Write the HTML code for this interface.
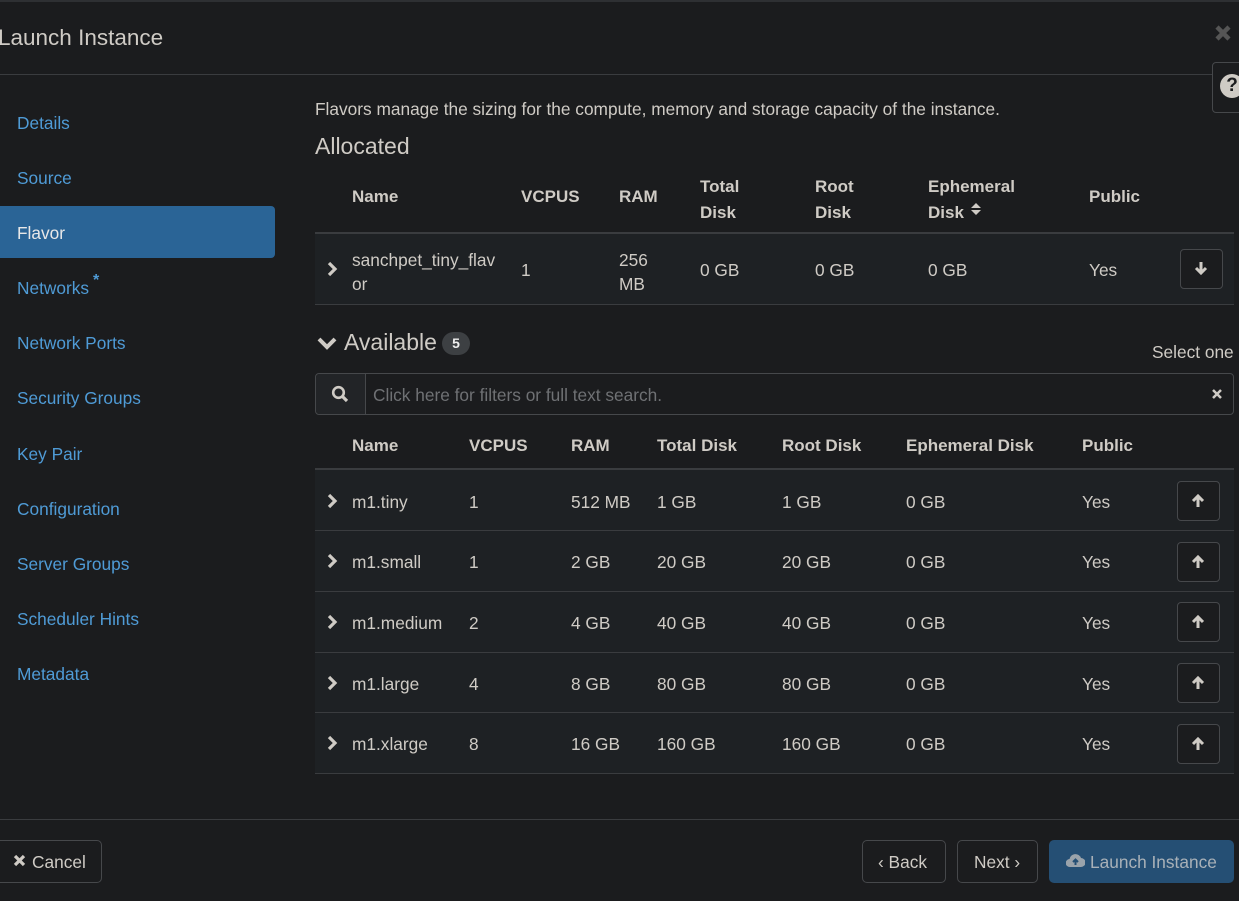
<!DOCTYPE html>
<html><head><meta charset="utf-8"><style>
*{box-sizing:border-box;margin:0;padding:0}
body{width:1239px;height:901px;background:#1b1c1e;font-family:"Liberation Sans",sans-serif;color:#cfcbc5;position:relative;overflow:hidden;font-size:17.3px}
.a{position:absolute;white-space:nowrap}
.nav{position:absolute;left:17px;color:#4f9bd6;font-size:17.3px}
.hd{font-weight:bold;color:#cfcbc5;font-size:17px}
.row{position:absolute;left:315px;width:919px;background:#1e2124;border-bottom:1px solid #3a3c3f}
.btn{position:absolute;border:1px solid #46484b;border-radius:4px;width:43px;height:40px;background:#1b1c1e}
.chev{position:absolute;left:325px;width:14px;height:16px}
</style></head><body>
<div class="a" style="left:0;top:0;width:1239px;height:2px;background:#2e3033"></div>
<div class="a" style="left:-2px;top:25px;font-size:22.5px;color:#cfcbc5">Launch Instance</div>
<svg class="a" style="left:1214px;top:24px" width="18" height="18" viewBox="0 0 18 18"><path d="M3 3L15 15M15 3L3 15" stroke="#555" stroke-width="4.5"/></svg>
<div class="a" style="left:0;top:74px;width:1239px;height:1px;background:#3a3c3f"></div>
<div class="a" style="left:1212px;top:62px;width:40px;height:51px;border:1px solid #46484b;border-radius:4px;background:#1b1c1e"></div>
<div class="a" style="left:1220px;top:74px;width:24px;height:24px;border-radius:50%;background:#cfcbc5;color:#1b1c1e;font-weight:bold;font-size:19px;text-align:center;line-height:24px">?</div>

<div class="nav" style="top:113px">Details</div>
<div class="nav" style="top:168px">Source</div>
<div class="a" style="left:0;top:206px;width:275px;height:52px;background:#2a6496;border-radius:0 4px 4px 0"></div>
<div class="nav" style="top:223px;color:#e8e8e8">Flavor</div>
<div class="nav" style="top:278px">Networks</div>
<div class="a" style="left:93px;top:272px;color:#4f9bd6;font-size:16px;font-weight:bold">*</div>
<div class="nav" style="top:333px">Network Ports</div>
<div class="nav" style="top:388px">Security Groups</div>
<div class="nav" style="top:444px">Key Pair</div>
<div class="nav" style="top:499px">Configuration</div>
<div class="nav" style="top:554px">Server Groups</div>
<div class="nav" style="top:609px">Scheduler Hints</div>
<div class="nav" style="top:664px">Metadata</div>

<div class="a" style="left:315px;top:99px">Flavors manage the sizing for the compute, memory and storage capacity of the instance.</div>
<div class="a" style="left:315px;top:133px;font-size:23px">Allocated</div>

<div class="a hd" style="left:352px;top:187px">Name</div>
<div class="a hd" style="left:521px;top:187px">VCPUS</div>
<div class="a hd" style="left:619px;top:187px">RAM</div>
<div class="a hd" style="left:700px;top:174px;line-height:26px">Total<br>Disk</div>
<div class="a hd" style="left:815px;top:174px;line-height:26px">Root<br>Disk</div>
<div class="a hd" style="left:928px;top:174px;line-height:26px">Ephemeral<br>Disk</div>
<svg class="a" style="left:970px;top:201px" width="12" height="16" viewBox="0 0 12 16"><path d="M1 7L6 2L11 7ZM1 9L6 14L11 9Z" fill="#cfcbc5"/></svg>
<div class="a hd" style="left:1089px;top:187px">Public</div>
<div class="a" style="left:315px;top:232px;width:919px;height:2px;background:#3a3c3f"></div>
<div class="row" style="top:234px;height:71px"></div>
<svg class="chev" style="top:261px" viewBox="0 0 14 16"><path d="M4 2L10 8L4 14" stroke="#cfcbc5" stroke-width="3.2" fill="none"/></svg>
<div class="a" style="left:352px;top:248px;line-height:24px">sanchpet_tiny_flav<br>or</div>
<div class="a" style="left:521px;top:260px">1</div>
<div class="a" style="left:619px;top:248px;line-height:24px">256<br>MB</div>
<div class="a" style="left:700px;top:260px">0 GB</div>
<div class="a" style="left:815px;top:260px">0 GB</div>
<div class="a" style="left:928px;top:260px">0 GB</div>
<div class="a" style="left:1089px;top:260px">Yes</div>
<div class="btn" style="left:1180px;top:249px"></div>
<svg class="a" style="left:1194px;top:261px" width="14" height="14" viewBox="0 0 14 14"><path d="M7 1V12M2 7L7 12L12 7" stroke="#cfcbc5" stroke-width="3" fill="none"/></svg>

<svg class="a" style="left:316px;top:334px" width="22" height="18" viewBox="0 0 22 18"><path d="M3 5L11 13L19 5" stroke="#cfcbc5" stroke-width="4" fill="none"/></svg>
<div class="a" style="left:344px;top:329px;font-size:23px">Available</div>
<div class="a" style="left:442px;top:332px;width:28px;height:23px;border-radius:12px;background:#3d4043;color:#eee;font-weight:bold;font-size:14px;text-align:center;line-height:23px">5</div>
<div class="a" style="left:1152px;top:342px">Select one</div>

<div class="a" style="left:315px;top:373px;width:919px;height:42px;border:1px solid #46484b;border-radius:4px;background:#1b1c1e"></div>
<div class="a" style="left:316px;top:374px;width:50px;height:40px;background:#222427;border-right:1px solid #46484b;border-radius:4px 0 0 4px"></div>
<svg class="a" style="left:331px;top:385px" width="18" height="18" viewBox="0 0 18 18"><circle cx="7.5" cy="7.5" r="5.3" stroke="#cfcbc5" stroke-width="2.6" fill="none"/><path d="M11.5 11.5L16 16" stroke="#cfcbc5" stroke-width="3.2"/></svg>
<div class="a" style="left:373px;top:385px;color:#6f7174">Click here for filters or full text search.</div>
<svg class="a" style="left:1211px;top:388px" width="12" height="12" viewBox="0 0 12 12"><path d="M2 2L10 10M10 2L2 10" stroke="#cfcbc5" stroke-width="2.5"/></svg>

<div class="a hd" style="left:352px;top:436px">Name</div>
<div class="a hd" style="left:469px;top:436px">VCPUS</div>
<div class="a hd" style="left:571px;top:436px">RAM</div>
<div class="a hd" style="left:657px;top:436px">Total Disk</div>
<div class="a hd" style="left:782px;top:436px">Root Disk</div>
<div class="a hd" style="left:906px;top:436px">Ephemeral Disk</div>
<div class="a hd" style="left:1082px;top:436px">Public</div>
<div class="a" style="left:315px;top:468px;width:919px;height:2px;background:#3a3c3f"></div>

<div class="row" style="top:470px;height:61px"></div>
<div class="row" style="top:531px;height:61px"></div>
<div class="row" style="top:592px;height:61px"></div>
<div class="row" style="top:653px;height:60px"></div>
<div class="row" style="top:713px;height:61px"></div>

<svg class="chev" style="top:493px" viewBox="0 0 14 16"><path d="M4 2L10 8L4 14" stroke="#cfcbc5" stroke-width="3.2" fill="none"/></svg>
<div class="a" style="left:352px;top:492px">m1.tiny</div><div class="a" style="left:469px;top:492px">1</div><div class="a" style="left:571px;top:492px">512 MB</div><div class="a" style="left:657px;top:492px">1 GB</div><div class="a" style="left:782px;top:492px">1 GB</div><div class="a" style="left:906px;top:492px">0 GB</div><div class="a" style="left:1082px;top:492px">Yes</div>
<div class="btn" style="left:1177px;top:481px"></div>

<svg class="chev" style="top:553px" viewBox="0 0 14 16"><path d="M4 2L10 8L4 14" stroke="#cfcbc5" stroke-width="3.2" fill="none"/></svg>
<div class="a" style="left:352px;top:552px">m1.small</div><div class="a" style="left:469px;top:552px">1</div><div class="a" style="left:571px;top:552px">2 GB</div><div class="a" style="left:657px;top:552px">20 GB</div><div class="a" style="left:782px;top:552px">20 GB</div><div class="a" style="left:906px;top:552px">0 GB</div><div class="a" style="left:1082px;top:552px">Yes</div>
<div class="btn" style="left:1177px;top:542px"></div>

<svg class="chev" style="top:614px" viewBox="0 0 14 16"><path d="M4 2L10 8L4 14" stroke="#cfcbc5" stroke-width="3.2" fill="none"/></svg>
<div class="a" style="left:352px;top:613px">m1.medium</div><div class="a" style="left:469px;top:613px">2</div><div class="a" style="left:571px;top:613px">4 GB</div><div class="a" style="left:657px;top:613px">40 GB</div><div class="a" style="left:782px;top:613px">40 GB</div><div class="a" style="left:906px;top:613px">0 GB</div><div class="a" style="left:1082px;top:613px">Yes</div>
<div class="btn" style="left:1177px;top:602px"></div>

<svg class="chev" style="top:675px" viewBox="0 0 14 16"><path d="M4 2L10 8L4 14" stroke="#cfcbc5" stroke-width="3.2" fill="none"/></svg>
<div class="a" style="left:352px;top:674px">m1.large</div><div class="a" style="left:469px;top:674px">4</div><div class="a" style="left:571px;top:674px">8 GB</div><div class="a" style="left:657px;top:674px">80 GB</div><div class="a" style="left:782px;top:674px">80 GB</div><div class="a" style="left:906px;top:674px">0 GB</div><div class="a" style="left:1082px;top:674px">Yes</div>
<div class="btn" style="left:1177px;top:663px"></div>

<svg class="chev" style="top:735px" viewBox="0 0 14 16"><path d="M4 2L10 8L4 14" stroke="#cfcbc5" stroke-width="3.2" fill="none"/></svg>
<div class="a" style="left:352px;top:734px">m1.xlarge</div><div class="a" style="left:469px;top:734px">8</div><div class="a" style="left:571px;top:734px">16 GB</div><div class="a" style="left:657px;top:734px">160 GB</div><div class="a" style="left:782px;top:734px">160 GB</div><div class="a" style="left:906px;top:734px">0 GB</div><div class="a" style="left:1082px;top:734px">Yes</div>
<div class="btn" style="left:1177px;top:724px"></div>

<svg class="a" style="left:1191px;top:494px" width="14" height="14" viewBox="0 0 14 14"><path d="M7 13V2M2 7L7 2L12 7" stroke="#cfcbc5" stroke-width="3" fill="none"/></svg>
<svg class="a" style="left:1191px;top:555px" width="14" height="14" viewBox="0 0 14 14"><path d="M7 13V2M2 7L7 2L12 7" stroke="#cfcbc5" stroke-width="3" fill="none"/></svg>
<svg class="a" style="left:1191px;top:615px" width="14" height="14" viewBox="0 0 14 14"><path d="M7 13V2M2 7L7 2L12 7" stroke="#cfcbc5" stroke-width="3" fill="none"/></svg>
<svg class="a" style="left:1191px;top:676px" width="14" height="14" viewBox="0 0 14 14"><path d="M7 13V2M2 7L7 2L12 7" stroke="#cfcbc5" stroke-width="3" fill="none"/></svg>
<svg class="a" style="left:1191px;top:737px" width="14" height="14" viewBox="0 0 14 14"><path d="M7 13V2M2 7L7 2L12 7" stroke="#cfcbc5" stroke-width="3" fill="none"/></svg>

<div class="a" style="left:0;top:819px;width:1239px;height:1px;background:#3a3c3f"></div>
<div class="a" style="left:-10px;top:840px;width:112px;height:43px;border:1px solid #46484b;border-radius:5px"></div>
<svg class="a" style="left:13px;top:854px" width="13" height="13" viewBox="0 0 13 13"><path d="M2 2L11 11M11 2L2 11" stroke="#cfcbc5" stroke-width="3.2"/></svg>
<div class="a" style="left:32px;top:852px">Cancel</div>
<div class="a" style="left:862px;top:840px;width:84px;height:43px;border:1px solid #46484b;border-radius:5px"></div>
<div class="a" style="left:878px;top:852px">‹ Back</div>
<div class="a" style="left:957px;top:840px;width:81px;height:43px;border:1px solid #46484b;border-radius:5px"></div>
<div class="a" style="left:974px;top:852px">Next ›</div>
<div class="a" style="left:1049px;top:840px;width:185px;height:43px;background:#254f74;border-radius:5px"></div>
<svg class="a" style="left:1066px;top:852px" width="19" height="16" viewBox="0 0 19 16"><path d="M4 15a4 4 0 0 1-.5-8A6 6 0 0 1 15 6a4.5 4.5 0 0 1 0 9z" fill="#9aa3ab"/><path d="M9.5 13V8M7 10L9.5 7.5L12 10" stroke="#254f74" stroke-width="2" fill="none"/></svg>
<div class="a" style="left:1090px;top:852px;color:#a9b1b8">Launch Instance</div>
</body></html>
